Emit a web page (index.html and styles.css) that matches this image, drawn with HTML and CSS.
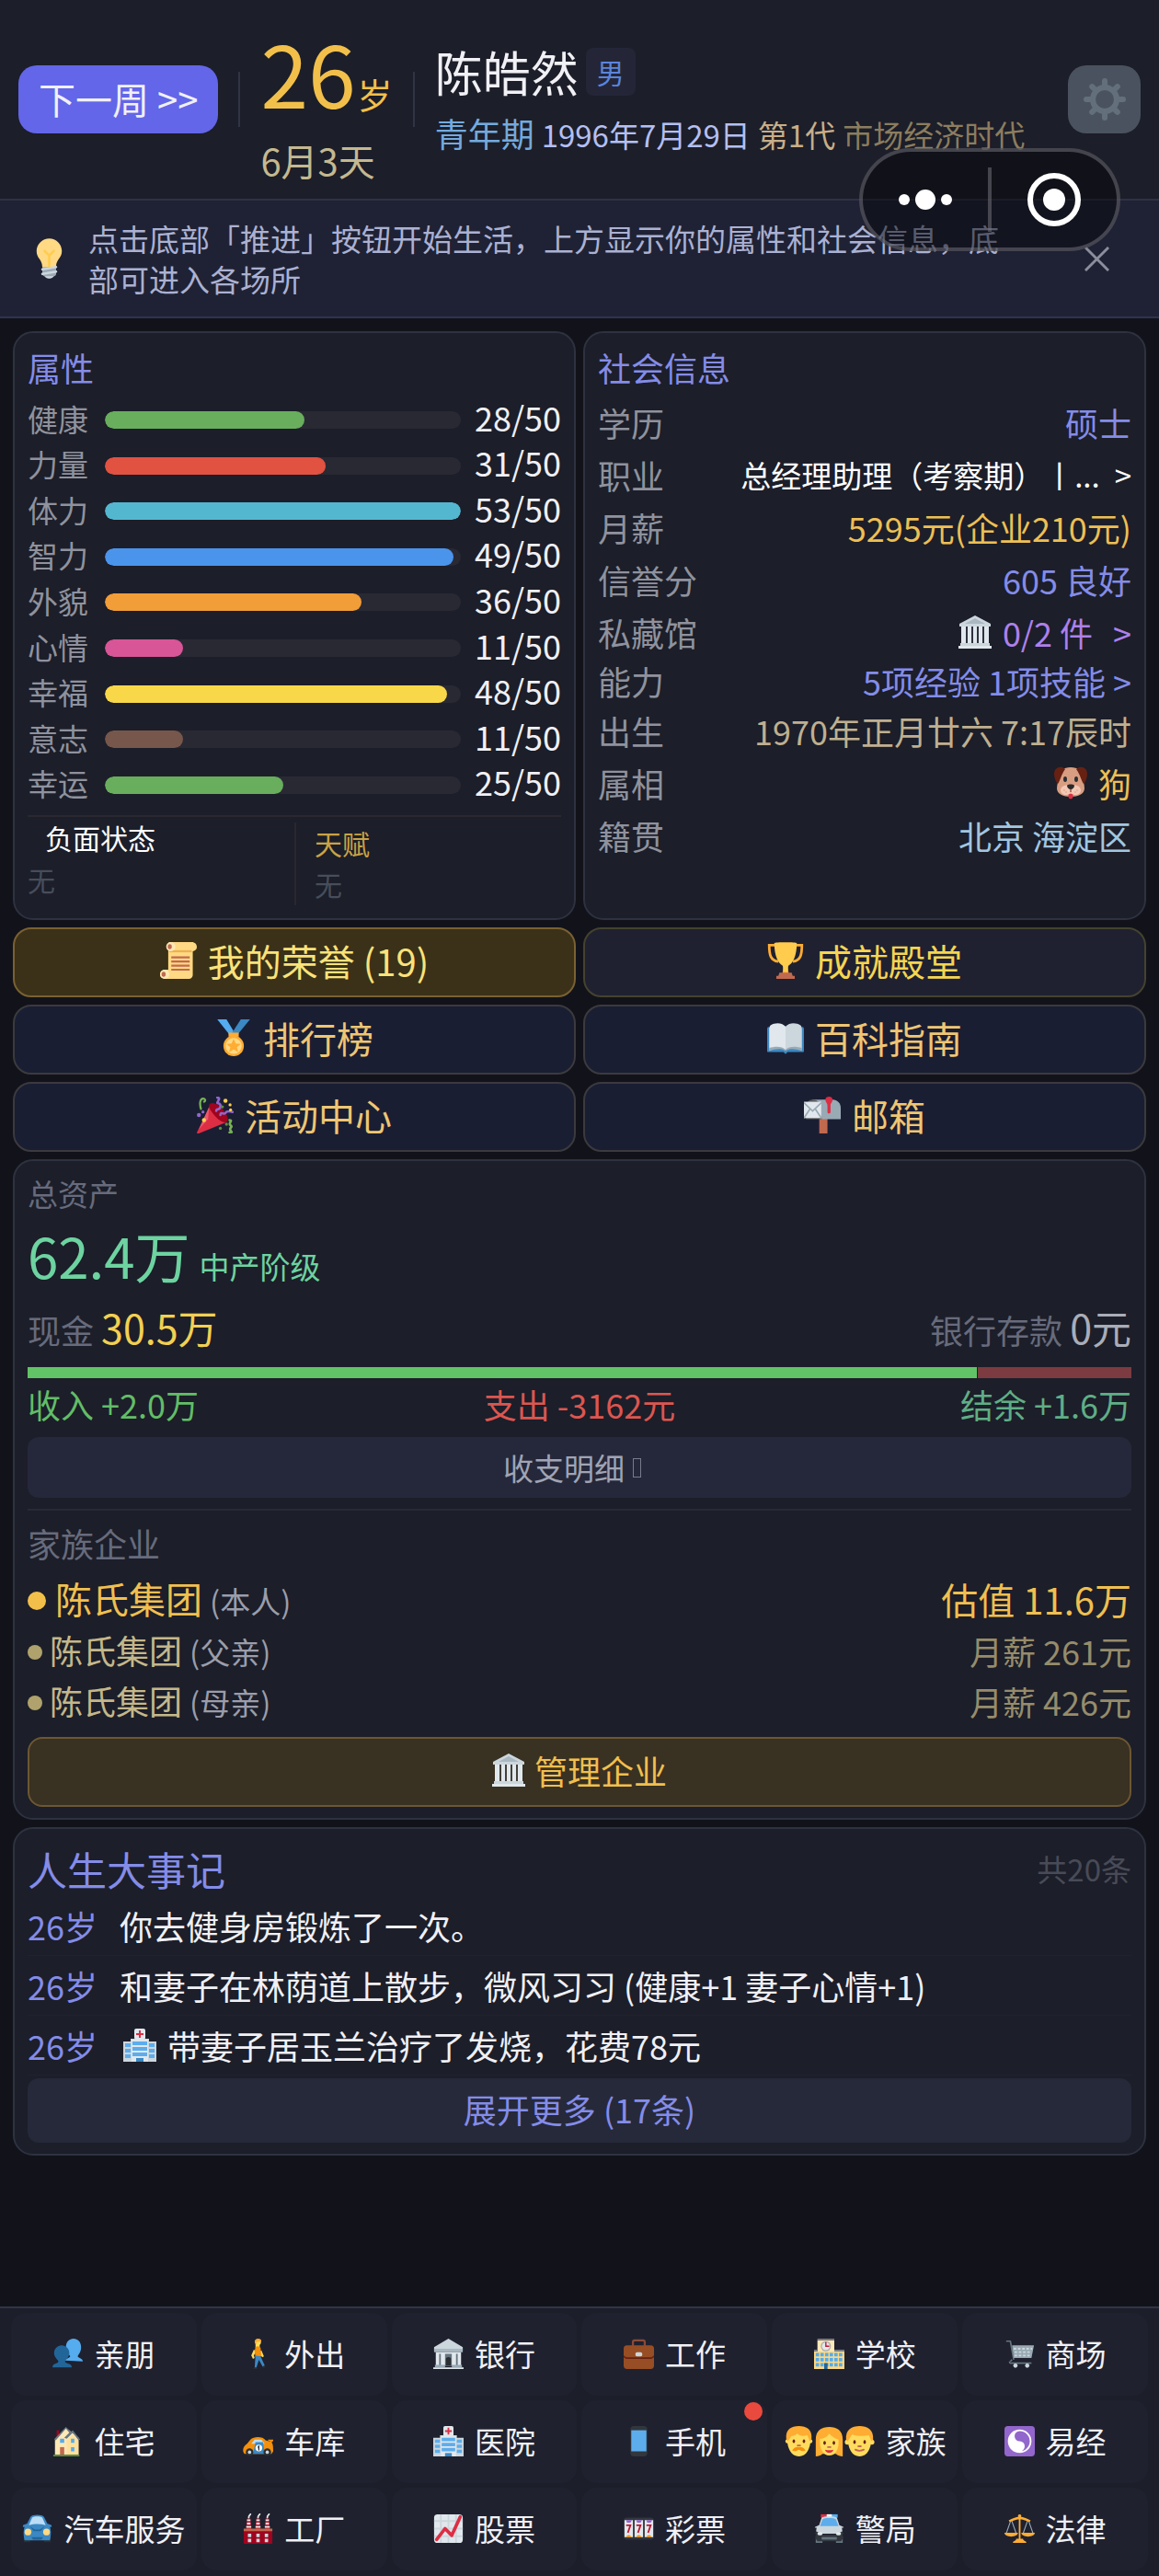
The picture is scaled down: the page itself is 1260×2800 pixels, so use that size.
FILE: index.html
```html
<!DOCTYPE html>
<html lang="zh-CN">
<head>
<meta charset="utf-8">
<meta name="viewport" content="width=device-width, initial-scale=1">
<title>陈皓然</title>
<link rel="stylesheet" href="styles.css">
</head>
<body>
<svg class="sprite" aria-hidden="true">
  <symbol id="i-bulb" viewBox="0 0 36 36"><path fill="#FFD983" d="M29 11.06c0 6.439-5 7.439-5 13.44 0 3.098-3.123 3.359-5.5 3.359-2.053 0-6.586-.779-6.586-3.361C11.914 18.5 7 17.5 7 11.06 7 5.029 12.285.14 18.083.14 23.883.14 29 5.029 29 11.06z"/><path fill="#CCD6DD" d="M22.167 32.5c0 .828-2.234 2.5-4.167 2.5-1.933 0-4.167-1.672-4.167-2.5 0-.828 2.233-.5 4.167-.5 1.933 0 4.167-.328 4.167.5z"/><path fill="#FFCC4D" d="M22.707 10.293c-.391-.391-1.023-.391-1.414 0L18 13.586l-3.293-3.293c-.391-.391-1.023-.391-1.414 0s-.391 1.023 0 1.414L17 15.414V26c0 .553.447 1 1 1s1-.447 1-1V15.414l3.707-3.707c.391-.391.391-1.023 0-1.414z"/><path fill="#99AAB5" d="M24 31c0 1.104-.896 2-2 2h-8c-1.104 0-2-.896-2-2v-6h12v6z"/><path fill="none" stroke="#CCD6DD" stroke-width="2" stroke-linecap="round" d="M12 31l12-2M12 27l12-2"/></symbol>
  <symbol id="i-gear" viewBox="0 0 48 48"><g fill="none" stroke="#63707b" stroke-width="6" stroke-linecap="round"><circle cx="24" cy="24" r="13"/><path d="M24 8V4M24 40v4M8 24H4M40 24h4M12.700 12.700l-2.500-2.500M35.300 35.300l2.500 2.500M12.700 35.300l-2.500 2.500M35.300 12.700l2.500-2.500"/></g></symbol>
  <symbol id="i-museum" viewBox="0 0 36 36"><path fill="#AAB8C2" d="M18 1L3 10h30z"/><path fill="#66757F" d="M5 12h26v18H5z" opacity=".25"/><path fill="#CCD6DD" d="M18 0L1 9v3h34V9zM18 3l11 6H7z"/><path fill="#E1E8ED" d="M3 12h5v19H3zM10 12h4v19h-4zM16 12h4v19h-4zM22 12h4v19h-4zM28 12h5v19h-5z"/><path fill="#CCD6DD" d="M2 30h32v3H2z"/><path fill="#E1E8ED" d="M0 33h36v3H0z"/></symbol>
  <symbol id="i-dog" viewBox="0 0 36 36"><path fill="#D99E82" d="M18 1c8 0 12 4 13 10 0 5 2 8 2 13 0 6-7 9-15 9S3 30 3 24c0-5 2-8 2-13C6 5 10 1 18 1z"/><path fill="#662113" d="M9 1C4 0 0 3 0 8c0 5 2 9 4 11 3-4 3-9 8-16zM27 1c5-1 9 2 9 7 0 5-2 9-4 11-3-4-3-9-8-16z"/><path fill="#DD2E44" d="M15.500 30h5v3a2.500 2.500 0 0 1-5 0z"/><path fill="#F4C7B5" d="M18 20c7 0 11 2 11 6 0 3-3 5-6 5s-5-2-5-3c0 1-2 3-5 3s-6-2-6-5c0-4 4-6 11-6z"/><path fill="#272B2B" d="M14 21c0-2 8-2 8 0 0 2-2 4-4 4s-4-2-4-4z"/><ellipse cx="12" cy="14" rx="2" ry="3" fill="#292F33"/><ellipse cx="24" cy="14" rx="2" ry="3" fill="#292F33"/><path stroke="#662113" fill="none" d="M18 24v4"/><g fill="#D99E82"><circle cx="11" cy="26" r=".8"/><circle cx="13" cy="28" r=".8"/><circle cx="25" cy="26" r=".8"/><circle cx="23" cy="28" r=".8"/></g></symbol>
  <symbol id="i-scroll" viewBox="0 0 36 36"><path fill="#FFD983" d="M8 2c0-2 1-2 4-2h19c3 0 5 2 5 5 0 2-2 4-4 4v23c0 3-2 4-4 4H5c-3 0-5-2-5-4 0-3 2-5 5-5h3z"/><path fill="#E39F3D" d="M9 8h22v2H9z" opacity=".7"/><circle cx="10.500" cy="4.500" r="4.500" fill="#FFE8B6"/><ellipse cx="9.500" cy="4.500" rx="2" ry="2.500" fill="#C1694F"/><circle cx="4.500" cy="31.500" r="4.500" fill="#FFE8B6"/><ellipse cx="3.500" cy="31.500" rx="2" ry="2.500" fill="#C1694F"/><path stroke="#C1694F" stroke-width="2" d="M11 15h18M11 19h18M11 23h18M11 27h18"/></symbol>
  <symbol id="i-trophy" viewBox="0 0 36 36"><path fill="none" stroke="#FFAC33" stroke-width="2.500" d="M9 3H2c0 9 1 15 9 16M27 3h7c0 9-1 15-9 16"/><path fill="#FFAC33" d="M16 20h4l1 11h-6z"/><path fill="#FFCC4D" d="M7 1C7 0 29 0 29 1c0 13-4 20-8 22-1 1-1 4-1 6h-4c0-2 0-5-1-6C11 21 7 14 7 1z"/><path fill="#C1694F" d="M12 30h12l1 3h2v3H9v-3h2z"/></symbol>
  <symbol id="i-medal" viewBox="0 0 36 36"><path fill="#55ACEE" d="M2 0h9l9 15h-6z"/><path fill="#3B88C3" d="M25 0h9L21 16l-5-2z"/><path fill="#FFAC33" d="M13 13h10v4H13z"/><circle cx="18" cy="26" r="10" fill="#FFAC33"/><circle cx="18" cy="26" r="7.800" fill="#FFD983"/><path fill="#FFAC33" d="M18 19l2 4.700 5 .3-3.800 3.300L22.500 32 18 29.500 13.500 32l1.300-4.700L11 24l5-.3z"/></symbol>
  <symbol id="i-book" viewBox="0 0 36 36"><path fill="#3B88C3" d="M1 7l15 22h4L35 7l1 2v22c0 1-1 1-2 1H20l-2 2-2-2H2c-1 0-2 0-2-1V9z"/><path fill="#E1E8ED" d="M3 6c5-3 11-3 15 1v23c-4-3-10-3-16 0V8z"/><path fill="#CCD6DD" d="M33 6c-5-3-11-3-15 1v23c4-3 10-3 16 0V8z"/><path fill="#99AAB5" d="M2 28c6-2 13-2 16 2v1c-4-3-10-2-16 0zM34 28c-6-2-13-2-16 2v1c4-3 10-2 16 0z"/></symbol>
  <symbol id="i-party" viewBox="0 0 36 36"><path fill="#DD2E44" d="M14 7L0 35c0 1 1 1 2 1l27-11z"/><path fill="#A0041E" d="M13 7c3-2 9 1 13 6s6 10 3 12c-3 1-8-2-12-7S10 9 13 7z"/><path fill="#EA596E" d="M12 10L2 32l9-10z"/><path fill="none" stroke="#77B255" stroke-width="2" stroke-linecap="round" d="M4 12c-2-7 0-11 3-10 2 1 1 3 0 3"/><path fill="none" stroke="#9266CC" stroke-width="2.300" stroke-linecap="round" d="M20 1c4 0 0 4 0 5s4 0 3 4-4 1-4 4"/><path fill="none" stroke="#9266CC" stroke-width="2.300" stroke-linecap="round" d="M23 18c0-4 4 0 5-2s3-2 7-1"/><path fill="none" stroke="#77B255" stroke-width="2.300" stroke-linecap="round" d="M32 23c4 0-2 3 1 5s-2 2 0 5 1 1-1 2"/><g fill="#FFCC4D"><circle cx="28" cy="4" r="2"/><circle cx="32.500" cy="8" r="1.500"/><circle cx="33" cy="13" r="1.500"/><circle cx="7" cy="23" r="2"/></g><g fill="#9266CC"><circle cx="2" cy="18" r="2"/><circle cx="6" cy="15" r="1.500"/></g><g fill="#5C913B"><circle cx="25" cy="10" r="1.500"/><circle cx="23" cy="31" r="1.500"/><circle cx="29" cy="27" r="1.500"/></g></symbol>
  <symbol id="i-mailbox" viewBox="0 0 36 36"><path fill="#C1694F" d="M15 20h8v16h-8z"/><path fill="#99AAB5" d="M8 3h20c5 0 8 4 8 8v11H18z"/><path fill="#58595B" d="M8 3c6 0 9 4 9 9v10H2V11c0-4 2-8 6-8z"/><path fill="#E1E8ED" d="M0 5h17v16H0z"/><path fill="none" stroke="#99AAB5" stroke-width="1.500" d="M0 6l8.500 8L17 6M0 21l6-9M17 21l-6-9"/><path fill="#DD2E44" d="M21 3c0-4 7-4 7 0 0 3-2 3-2 6v6c0 2-3 2-3 0V9c0-3-2-3-2-6z"/></symbol>
  <symbol id="i-people" viewBox="0 0 36 36"><path fill="#55ACEE" d="M15 26c1-3 6-3 6-5s-5-4-5-11c0-6 4-10 9-10s9 4 9 10c0 7-4 9-4 11s6 2 6 6z"/><path fill="#269" d="M0 34c0-5 7-4 7-7 0-2-5-4-5-10 0-5 4-9 9-9s9 4 9 9c0 6-5 8-5 10 0 3 8 2 8 7z"/></symbol>
  <symbol id="i-walk" viewBox="0 0 36 36"><path fill="#FFDC5D" d="M15 6h5v5h-5zM13 13l-3 7 2 4 2-1-1-3 3-5zM22 14l3 7-2 1-4-6z"/><circle cx="18" cy="4" r="3.500" fill="#FFDC5D"/><path fill="#FFAC33" d="M14 4c0-5 8-5 8-1l-6 1v3z"/><path fill="#F4900C" d="M15 10c2-2 5-1 6 1l1 10-7 1-1-7z"/><path fill="#3B88C3" d="M15 20l6 1 5 11-2 2-5-9-3 10h-2z"/><path fill="#292F33" d="M13 34h4v2h-5zM23 33l3-1 1 2-3 1z"/></symbol>
  <symbol id="i-bank" viewBox="0 0 36 36"><path fill="#E1E8ED" d="M3 16h30v16H3z"/><path fill="#CCD6DD" d="M18 0L1 10v4h34v-4z"/><path fill="#AAB8C2" d="M1 12h34v4H1z"/><path fill="#66757F" d="M7 18h2v14H7zM14 18h8v14h-8zM27 18h2v14h-2z"/><path fill="#292F33" d="M15 32v-8c0-3 6-3 6 0v8z"/><path fill="#99AAB5" d="M2 31h12v3H2zM22 31h12v3H22z"/><path fill="#E1E8ED" d="M0 34h36v2H0z"/></symbol>
  <symbol id="i-case" viewBox="0 0 36 36"><path fill="none" stroke="#8A4B38" stroke-width="2.500" d="M11 9V4c0-2 1-2 2-2h10c1 0 2 0 2 2v5"/><rect y="8" width="36" height="28" rx="4" fill="#974E24"/><path fill="#662113" d="M0 20l3 2h30l3-2v2l-3 2H3l-3-2z"/><rect x="14" y="16" width="8" height="5" rx="2" fill="#CCD6DD"/></symbol>
  <symbol id="i-school" viewBox="0 0 36 36"><path fill="#FFE8B6" d="M4 2h20v34H4z"/><path fill="#FFD983" d="M0 15h36v21H0z"/><path fill="#808285" d="M4 0h20v2H4zM24 13h12v2H24zM0 13h4v2H0z"/><circle cx="14" cy="9" r="6" fill="#A7A9AC"/><circle cx="14" cy="9" r="4.700" fill="#E6E7E8"/><path fill="none" stroke="#BE1931" stroke-width="1.500" d="M14 4v5h4"/><path fill="none" stroke="#55ACEE" stroke-width="4" stroke-dasharray="4 1.500" d="M2 19h33M2 25h33M2 31h33"/><path fill="#226699" d="M12 29h4v7h-4z"/></symbol>
  <symbol id="i-cart" viewBox="0 0 36 36"><path fill="none" stroke="#66757F" stroke-width="1.800" stroke-linejoin="round" d="M2 3h5l4 22M7 27l2-2M6 27c0 3 2 2 4 2h22"/><path fill="#99AAB5" d="M9 8h26l-3 15H11z"/><path fill="none" stroke="#CCD6DD" stroke-width="2" stroke-dasharray="3 2" d="M11 12h22M12 16h20M12 20h20"/><circle cx="13" cy="32" r="2.500" fill="#CCD6DD"/><circle cx="27" cy="32" r="2.500" fill="#CCD6DD"/></symbol>
  <symbol id="i-house" viewBox="0 0 36 36"><path fill="#A0041E" d="M5 5h3v9H5z"/><path fill="#FFE8B6" d="M3 15L16 2l15 12v20H3z"/><path fill="#66757F" d="M2 16L16 1l6 6 2-2 9 11-2 1-7-9-7 7-3-1 6-6-4-5L4 17z"/><path fill="#FFD983" d="M17 17l7-7 7 8v16H17z" opacity=".5"/><path fill="#55ACEE" d="M9 15h5v5H9zM22 15h4v5h-4zM22 25h4v5h-4z"/><path fill="#C1694F" d="M9 25h5v9H9z"/><path fill="#5C913B" d="M1 34h31v2H1z"/></symbol>
  <symbol id="i-car" viewBox="0 0 36 36"><path fill="#F4900C" d="M5 21l4-5c4-4 15-4 18 1l7 2c2 2 2 6 2 11l-2 3H2c-3-3-2-9 3-12z"/><path fill="#BBDDF5" d="M14 16h8l4 5H10z"/><path fill="#3B88C3" d="M15 19h9l2 14H12z"/><path stroke="#F4900C" stroke-width="2" d="M30 17h6M32 20l3-3"/><circle cx="19" cy="26" r="4" fill="#fff"/><path stroke="#292F33" stroke-width="1.300" d="M18 25l1-1v5"/><g fill="#292F33"><circle cx="8" cy="31" r="4.500"/><circle cx="29" cy="31" r="4.500"/></g><g fill="#CCD6DD"><circle cx="8" cy="31" r="2"/><circle cx="29" cy="31" r="2"/></g></symbol>
  <symbol id="i-hospital" viewBox="0 0 36 36"><path fill="#CCD6DD" d="M0 14h8v-3h20v3h8v22H0z"/><rect x="12" width="12" height="12" rx="2" fill="#E1E8ED"/><path fill="#E1E8ED" d="M9 12h18v24H9z"/><path stroke="#DD2E44" stroke-width="2" d="M18 2v8M14 6h8"/><path fill="#5DADEC" d="M10 14h16v4H10zM10 20h16v4H10zM10 26h16v4H10zM2 16h6v4H2zM2 22h6v4H2zM2 28h6v4H2zM28 16h6v4h-6zM28 22h6v4h-6zM28 28h6v4h-6z"/><path fill="#3B88C3" d="M14 32h8v4h-8z"/></symbol>
  <symbol id="i-phone" viewBox="0 0 36 36"><rect x="8" width="20" height="36" rx="4" fill="#31373D"/><path fill="#5DADEC" d="M9 5h18v25H9z"/></symbol>
  <symbol id="i-man" viewBox="0 0 36 36"><path fill="#FFDC5D" d="M4 14C4 4 32 4 32 14c0 13-5 22-14 22S4 27 4 14z"/><circle cx="4.500" cy="18" r="2.500" fill="#FFDC5D"/><circle cx="31.500" cy="18" r="2.500" fill="#FFDC5D"/><path fill="#FFAC33" d="M3 15C2 4 9 0 18 0s16 4 15 15l-2 3-3-7c-5 1-9 1-12-2-2 2-5 3-7 3l-4 6z"/><g fill="#662113"><ellipse cx="12" cy="18" rx="1.500" ry="2.300"/><ellipse cx="24" cy="18" rx="1.500" ry="2.300"/></g><path stroke="#C1694F" stroke-width="2" stroke-linecap="round" d="M16.500 23h3"/><path fill="#F4900C" d="M18 25c5-1 7 3 8 4-3 2-6 0-8-1-2 1-5 3-8 1 1-1 3-5 8-4z"/></symbol>
  <symbol id="i-woman" viewBox="0 0 36 36"><path fill="#FFAC33" d="M2 36V16C2 5 9 1 18 1s16 4 16 15v20c-3 0-6-1-8-3H10c-2 2-5 3-8 3z"/><path fill="#FFDC5D" d="M7 15c6 0 9-3 11-6 4 4 7 6 11 7 1 12-4 19-11 19S6 27 7 15z"/><g fill="#662113"><ellipse cx="12.500" cy="20" rx="1.500" ry="2.300"/><ellipse cx="23.500" cy="20" rx="1.500" ry="2.300"/></g><path stroke="#C1694F" stroke-width="2" stroke-linecap="round" d="M16.500 25h3"/><path fill="#DD2E44" d="M13 28c4 1 6 1 10 0-1 5-9 5-10 0z"/></symbol>
  <symbol id="i-boy" viewBox="0 0 36 36"><path fill="#FFDC5D" d="M4 14C4 4 32 4 32 14c0 13-5 22-14 22S4 27 4 14z"/><circle cx="3.500" cy="19" r="3" fill="#FFDC5D"/><circle cx="32.500" cy="19" r="3" fill="#FFDC5D"/><path fill="#FFAC33" d="M2 16C1 4 9 0 18 0s17 4 16 16l-2 2-3-7c-7 1-13 1-20-1l-5 8z"/><g fill="#662113"><ellipse cx="12" cy="19" rx="1.500" ry="2.300"/><ellipse cx="24" cy="19" rx="1.500" ry="2.300"/></g><path stroke="#C1694F" stroke-width="2" stroke-linecap="round" d="M16.500 24h3"/><path fill="none" stroke="#C1694F" stroke-width="2" stroke-linecap="round" d="M13 28c4 2 6 2 10 0"/></symbol>
  <symbol id="i-yin" viewBox="0 0 36 36"><rect width="36" height="36" rx="4" fill="#9266CC"/><circle cx="18" cy="18" r="14" fill="#fff"/><path fill="#9266CC" d="M18 6a12 12 0 1 1 0 24 6 6 0 0 0 0-12 6 6 0 0 1 0-12z"/><circle cx="18" cy="12" r="2.500" fill="#9266CC"/><circle cx="18" cy="24" r="2.500" fill="#fff"/></symbol>
  <symbol id="i-auto" viewBox="0 0 36 36"><path fill="#292F33" d="M2 26h8v8H2zM26 26h8v8h-8z"/><path fill="#3B88C3" d="M6 12L10 4c2-3 14-3 16 0l4 8 5 2v2h-2c2 5 1 12 0 16H3c-1-4-2-11 0-16H1v-2z"/><path fill="#BBDDF5" d="M12 5c2-2 10-2 12 0l4 9c-7-2-13-2-20 0z"/><path fill="#269" d="M11 28h14l-2 3H13zM9 15l6 4h6l6-4-5 6h-8z"/><circle cx="7" cy="22" r="4" fill="#FFD983"/><circle cx="29" cy="22" r="4" fill="#FFD983"/></symbol>
  <symbol id="i-factory" viewBox="0 0 36 36"><path fill="#BE1931" d="M5 6h4l1 13H4zM16 6h4l1 13h-6zM27 6h4l1 13h-6z"/><path stroke="#E6E7E8" stroke-width="2" d="M5 8h4M5 12h4M4 16h6M16 8h4M16 12h4M15 16h6M27 8h4M27 12h4M26 16h6"/><path fill="none" stroke="#E6E7E8" stroke-width="2" stroke-linecap="round" d="M7 5c0-3 1-2 2-4M18 5c0-3 1-2 2-4M29 5c0-3 1-2 2-4"/><path fill="#A0041E" d="M1 19h34v16c0 1-1 1-1 1H2s-1 0-1-1z"/><path fill="#C1694F" d="M1 18h34v3H1z"/><path fill="#CCD6DD" d="M6 24h4v4H6zM16 24h4v4h-4zM26 24h4v4h-4zM6 30h4v4H6zM16 30h4v4h-4zM26 30h4v4h-4z"/></symbol>
  <symbol id="i-chart" viewBox="0 0 36 36"><rect x="1" y="1" width="34" height="34" rx="4" fill="#E1E8ED"/><path fill="none" stroke="#CCD6DD" stroke-width="2" d="M9 1v34M18 1v34M27 1v34M1 9h34M1 18h34M1 27h34"/><path fill="none" stroke="#DD2E44" stroke-width="4" stroke-linecap="round" stroke-linejoin="round" d="M4 31l10-13 8 8L32 4"/></symbol>
  <symbol id="i-slot" viewBox="0 0 36 36"><rect y="5" width="36" height="26" rx="4" fill="#31373D"/><path fill="#E1E8ED" d="M1 8h10v20H1zM13 8h10v20H13zM25 8h10v20H25z"/><path fill="#9266CC" d="M3 8h7l-2 3H4zM15 8h7l-2 3h-4zM27 8h7l-2 3h-4z"/><path fill="#F4900C" d="M3 28c1-3 5-3 6 0zM15 28c1-3 5-3 6 0zM27 28c1-3 5-3 6 0z"/><path fill="none" stroke="#BE1931" stroke-width="2" d="M3 14h5l-3 9M15 14h5l-3 9M27 14h5l-3 9"/></symbol>
  <symbol id="i-police" viewBox="0 0 36 36"><path fill="#66757F" d="M2 27h8v8H2zM26 27h8v8h-8z"/><path fill="#DD2E44" d="M8 1h10v4H8z"/><path fill="#55ACEE" d="M18 1h10v4H18z"/><path fill="#fff" d="M15 1h6v4h-6z"/><path fill="#CCD6DD" d="M6 14L9 5c2-2 16-2 18 0l3 9 5 2v1h-2l1 7H2l1-7H1v-1z"/><path fill="#5DADEC" d="M10 7c2-2 14-2 16 0l3 8H7z"/><path fill="#31373D" d="M2 21l9 4h14l9-4v9l-2 3H4l-2-3z"/><path fill="#66757F" d="M9 28h18v3H9z"/><rect x="4" y="22" width="6" height="4" rx="2" fill="#E1E8ED"/><rect x="26" y="22" width="6" height="4" rx="2" fill="#E1E8ED"/></symbol>
  <symbol id="i-scale" viewBox="0 0 36 36"><path fill="none" stroke="#99AAB5" stroke-width="1.200" d="M8 7L2 24M8 7l6 17M28 7l-6 17M28 7l6 17"/><path fill="#FFAC33" d="M17 2h2v31h-2zM5 8c4-1 6-4 13-4s9 3 13 4l-1 2c-5-1-6-3-12-3s-7 2-12 3zM0 23h16c0 6-16 6-16 0zM20 23h16c0 6-16 6-16 0zM14 30h8c0 3 4 2 4 5H10c0-3 4-2 4-5z"/><circle cx="18" cy="3" r="2" fill="#FFAC33"/></symbol>
</svg>

<header class="top">
  <button class="next" type="button">下一周 &gt;&gt;</button>
  <span class="rule"></span>
  <div class="age">
    <div class="age-main">26<small>岁</small></div>
    <div class="age-sub">6月3天</div>
  </div>
  <span class="rule"></span>
  <div class="who">
    <h1 class="name">陈皓然<span class="sex">男</span></h1>
    <p class="facts"><span class="stage">青年期</span><span class="date">1996年7月29日</span><span class="gen">第1代</span><span class="era">市场经济时代</span></p>
  </div>
  <button class="settings" type="button" aria-label="设置"><svg><use href="#i-gear"/></svg></button>
  <div class="capsule">
    <button type="button" aria-label="更多"><svg viewBox="0 0 60 60"><g fill="#fff"><circle cx="7" cy="30" r="6"/><circle cx="30" cy="30" r="11"/><circle cx="53" cy="30" r="6"/></g></svg></button>
    <span class="capsule-rule"></span>
    <button type="button" aria-label="关闭"><svg viewBox="0 0 60 60"><circle cx="30" cy="30" r="26" fill="none" stroke="#fff" stroke-width="6"/><circle cx="30" cy="30" r="12" fill="#fff"/></svg></button>
  </div>
</header>

<section class="notice">
  <svg class="notice-icon"><use href="#i-bulb"/></svg>
  <p>点击底部「推进」按钮开始生活，上方显示你的属性和社会信息，底部可进入各场所</p>
  <button class="dismiss" type="button" aria-label="关闭提示"><svg viewBox="0 0 28 28"><path d="M1 1l26 26M27 1L1 27" fill="none" stroke="#8b8e9c" stroke-width="3"/></svg></button>
</section>

<main class="main">
  <div class="pair">
    <section class="card">
      <h2 class="card-title">属性</h2>
      <div class="stats">
        <div class="stat"><span>健康</span><div class="track"><div class="fill green" style="width:56%"></div></div><b>28/50</b></div>
        <div class="stat"><span>力量</span><div class="track"><div class="fill red" style="width:62%"></div></div><b>31/50</b></div>
        <div class="stat"><span>体力</span><div class="track"><div class="fill cyan" style="width:100%"></div></div><b>53/50</b></div>
        <div class="stat"><span>智力</span><div class="track"><div class="fill blue" style="width:98%"></div></div><b>49/50</b></div>
        <div class="stat"><span>外貌</span><div class="track"><div class="fill orange" style="width:72%"></div></div><b>36/50</b></div>
        <div class="stat"><span>心情</span><div class="track"><div class="fill pink" style="width:22%"></div></div><b>11/50</b></div>
        <div class="stat"><span>幸福</span><div class="track"><div class="fill yellow" style="width:96%"></div></div><b>48/50</b></div>
        <div class="stat"><span>意志</span><div class="track"><div class="fill brown" style="width:22%"></div></div><b>11/50</b></div>
        <div class="stat"><span>幸运</span><div class="track"><div class="fill green" style="width:50%"></div></div><b>25/50</b></div>
      </div>
      <div class="traits">
        <div class="trait"><h3 class="trait-bad">负面状态</h3><p>无</p></div>
        <div class="trait trait-right"><h3 class="trait-good">天赋</h3><p>无</p></div>
      </div>
    </section>
    <section class="card">
      <h2 class="card-title">社会信息</h2>
      <dl class="info">
        <div><dt>学历</dt><dd class="c-indigo">硕士</dd></div>
        <div><dt>职业</dt><dd><a class="job" href="#"><span>总经理助理（考察期）丨...</span><span>&gt;</span></a></dd></div>
        <div><dt>月薪</dt><dd class="c-gold">5295元(企业210元)</dd></div>
        <div><dt>信誉分</dt><dd class="c-indigo">605 良好</dd></div>
        <div><dt>私藏馆</dt><dd><a class="c-purple" href="#"><svg class="ico"><use href="#i-museum"/></svg>0/2 件<span class="more">&gt;</span></a></dd></div>
        <div class="tight"><dt>能力</dt><dd><a class="c-indigo" href="#">5项经验 1项技能 &gt;</a></dd></div>
        <div><dt>出生</dt><dd class="c-sand">1970年正月廿六 7:17辰时</dd></div>
        <div><dt>属相</dt><dd class="c-gold"><svg class="ico"><use href="#i-dog"/></svg>狗</dd></div>
        <div><dt>籍贯</dt><dd class="c-sky">北京 海淀区</dd></div>
      </dl>
    </section>
  </div>

  <nav class="links">
    <button class="link honor" type="button"><svg class="ico"><use href="#i-scroll"/></svg>我的荣誉 (19)</button>
    <button class="link hall" type="button"><svg class="ico"><use href="#i-trophy"/></svg>成就殿堂</button>
    <button class="link" type="button"><svg class="ico"><use href="#i-medal"/></svg>排行榜</button>
    <button class="link" type="button"><svg class="ico"><use href="#i-book"/></svg>百科指南</button>
    <button class="link" type="button"><svg class="ico"><use href="#i-party"/></svg>活动中心</button>
    <button class="link" type="button"><svg class="ico"><use href="#i-mailbox"/></svg>邮箱</button>
  </nav>

  <section class="card assets">
    <h2 class="muted-title">总资产</h2>
    <p class="total">62.4万<span>中产阶级</span></p>
    <div class="split money"><span>现金<b class="cash">30.5万</b></span><span>银行存款<b>0元</b></span></div>
    <div class="ratio"><div class="ratio-in" style="width:86%"></div><div class="ratio-out"></div></div>
    <div class="split flow"><span class="in">收入 +2.0万</span><span class="out">支出 -3162元</span><span class="net">结余 +1.6万</span></div>
    <button class="plain detail" type="button">收支明细<i class="box"></i></button>
    <div class="firm">
      <h2 class="firm-title">家族企业</h2>
      <div class="split own"><span><i class="dot"></i>陈氏集团<small>(本人)</small></span><span>估值 11.6万</span></div>
      <div class="split kin"><span><i class="dot"></i>陈氏集团<small>(父亲)</small></span><span class="wage">月薪 261元</span></div>
      <div class="split kin"><span><i class="dot"></i>陈氏集团<small>(母亲)</small></span><span class="wage">月薪 426元</span></div>
      <button class="manage" type="button"><svg class="ico"><use href="#i-museum"/></svg>管理企业</button>
    </div>
  </section>

  <section class="card events">
    <div class="split events-head"><h2>人生大事记</h2><span>共20条</span></div>
    <ul>
      <li><span>26岁</span><p>你去健身房锻炼了一次。</p></li>
      <li><span>26岁</span><p>和妻子在林荫道上散步，微风习习 (健康+1 妻子心情+1)</p></li>
      <li><span>26岁</span><p><svg class="ico"><use href="#i-hospital"/></svg>带妻子居玉兰治疗了发烧，花费78元</p></li>
    </ul>
    <button class="plain expand" type="button">展开更多 (17条)</button>
  </section>
</main>

<nav class="dock">
  <button type="button"><svg class="ico"><use href="#i-people"/></svg>亲朋</button>
  <button type="button"><svg class="ico"><use href="#i-walk"/></svg>外出</button>
  <button type="button"><svg class="ico"><use href="#i-bank"/></svg>银行</button>
  <button type="button"><svg class="ico"><use href="#i-case"/></svg>工作</button>
  <button type="button"><svg class="ico"><use href="#i-school"/></svg>学校</button>
  <button type="button"><svg class="ico"><use href="#i-cart"/></svg>商场</button>
  <button type="button"><svg class="ico"><use href="#i-house"/></svg>住宅</button>
  <button type="button"><svg class="ico"><use href="#i-car"/></svg>车库</button>
  <button type="button"><svg class="ico"><use href="#i-hospital"/></svg>医院</button>
  <button type="button"><svg class="ico"><use href="#i-phone"/></svg>手机<i class="badge"></i></button>
  <button type="button"><span class="family"><svg class="ico"><use href="#i-man"/></svg><svg class="ico"><use href="#i-woman"/></svg><svg class="ico"><use href="#i-boy"/></svg></span>家族</button>
  <button type="button"><svg class="ico"><use href="#i-yin"/></svg>易经</button>
  <button type="button"><svg class="ico"><use href="#i-auto"/></svg>汽车服务</button>
  <button type="button"><svg class="ico"><use href="#i-factory"/></svg>工厂</button>
  <button type="button"><svg class="ico"><use href="#i-chart"/></svg>股票</button>
  <button type="button"><svg class="ico"><use href="#i-slot"/></svg>彩票</button>
  <button type="button"><svg class="ico"><use href="#i-police"/></svg>警局</button>
  <button type="button"><svg class="ico"><use href="#i-scale"/></svg>法律</button>
</nav>
</body>
</html>
```

FILE: styles.css
```css
* { box-sizing: border-box; margin: 0; padding: 0; }

body {
  min-height: 100vh;
  display: flex;
  flex-direction: column;
  background: #12131a;
  color: #f0f0f5;
  font-family: "Noto Sans CJK SC", sans-serif;
  font-size: 36px;
  line-height: 50px;
}

button { font: inherit; color: inherit; border: 0; background: none; cursor: pointer; white-space: nowrap; }
a { color: inherit; text-decoration: none; }
ul { list-style: none; }
h1, h2, h3, b { font-weight: 400; }
i { font-style: normal; }
.sprite { position: absolute; width: 0; height: 0; }
.ico { width: 1em; height: 1em; flex: none; }

/* header */
.top {
  position: relative;
  display: flex;
  align-items: center;
  gap: 22px;
  height: 218px;
  padding: 0 20px;
  background: #1c1e29;
  border-bottom: 2px solid #2f3244;
}
.next {
  height: 74px;
  padding: 0 22px 2px;
  border-radius: 20px;
  background: #6366e8;
  font-size: 40px;
}
.rule { width: 2px; height: 60px; background: #313443; }
.age { white-space: nowrap; }
.age-main { font-size: 93px; line-height: 132px; color: #f2c04a; }
.age-main small { margin-left: 2px; font-size: 38px; line-height: 38px; }
.age-sub { font-size: 40px; line-height: 60px; color: #c4b990; }
.who { flex: 1; white-space: nowrap; }
.name { display: flex; align-items: center; gap: 8px; font-size: 52px; line-height: 74px; }
.sex {
  padding: 0 12px;
  border-radius: 8px;
  background: #242638;
  color: #5a85dc;
  font-size: 30px;
  line-height: 52px;
}
.facts { display: flex; align-items: baseline; gap: 8px; font-size: 33px; line-height: 58px; }
.stage { font-size: 36px; color: #74aade; }
.date { color: #b4bff2; }
.gen { color: #c9ad87; }
.era { color: #8b7d5f; }
.settings {
  display: grid;
  place-items: center;
  width: 79px;
  height: 74px;
  border-radius: 20px;
  background: #4b525f;
}
.settings svg { width: 48px; height: 48px; }

/* host app controls, floating over the page */
.capsule {
  position: absolute;
  z-index: 1;
  top: 161px;
  right: 42px;
  display: flex;
  align-items: center;
  width: 284px;
  height: 112px;
  border: 4px solid rgba(120, 120, 130, .5);
  border-radius: 56px;
  background: rgba(6, 6, 10, .5);
}
.capsule button { flex: 1; display: grid; place-items: center; }
.capsule svg { width: 60px; height: 60px; }
.capsule-rule { width: 4px; height: 70px; background: rgba(120, 120, 130, .5); }

/* notice */
.notice {
  display: flex;
  align-items: center;
  gap: 20px;
  padding: 19px 36px 19px 31px;
  background: #1f2234;
  border-bottom: 2px solid #2f3350;
  color: #abb1d2;
  font-size: 33px;
  line-height: 44px;
}
.notice-icon { width: 45px; height: 45px; flex: none; }
.notice p { flex: 1; }
.dismiss { width: 64px; height: 64px; margin-left: 28px; display: grid; place-items: center; }
.dismiss svg { width: 27px; height: 27px; }

/* cards */
.main { display: flex; flex-direction: column; gap: 8px; padding: 14px 14px 0; }
.pair { display: grid; grid-template-columns: 1fr 1fr; gap: 8px; }
.card {
  padding: 12px 14px;
  border: 2px solid #2e3240;
  border-radius: 22px;
  background: #1c1e29;
}
.card-title { padding-bottom: 6px; color: #848ce8; font-size: 36px; line-height: 50px; }

.stats { display: grid; grid-auto-rows: 1fr; height: 446px; line-height: 46px; }
.stat { display: flex; align-items: center; font-size: 33px; }
.stat span { width: 84px; color: #8f929d; }
.stat b { width: 109px; font-size: 36px; line-height: 42px; padding-bottom: 4px; text-align: right; }
.track { flex: 1; height: 19px; margin-top: 4px; border-radius: 10px; background: #292934; overflow: hidden; }
.fill { height: 100%; border-radius: 10px; }
.green { background: #69ae5d; }
.red { background: #e15241; }
.cyan { background: #54b7d0; }
.blue { background: #4a94ec; }
.orange { background: #f19d38; }
.pink { background: #d85597; }
.yellow { background: #f8d849; }
.brown { background: #77574b; }

.traits {
  display: grid;
  grid-template-columns: 1fr 1fr;
  margin-top: 10px;
  padding: 6px 0 2px;
  border-top: 2px solid #29272f;
  font-size: 30px;
  line-height: 45px;
}
.trait h3 { font-size: 30px; }
.trait p { color: #464d5b; }
.trait-bad { padding: 0 0 8px 19px; color: #fff; line-height: 32px; }
.trait-right { padding: 0 0 0 20px; border-left: 2px solid #29272f; }
.trait-good { color: #c9a345; }

.info > div { display: flex; justify-content: space-between; align-items: center; height: 57px; }
.info > .tight { height: 50px; }
.info dt { color: #8f929d; }
.info dd, .info a { display: flex; align-items: center; white-space: nowrap; }
.info .ico { margin-right: 12px; }
.info .job { gap: 16px; font-size: 33px; color: #fff; }
.more { margin-left: 22px; }
.c-indigo { color: #848ce8; }
.c-gold { color: #edbf55; }
.c-purple { color: #ae80ea; }
.c-sand { color: #bfaf90; }
.c-sky { color: #a2c6e0; }

/* shortcut buttons */
.links { display: grid; grid-template-columns: 1fr 1fr; gap: 8px; }
.link {
  display: flex;
  align-items: center;
  justify-content: center;
  gap: 12px;
  height: 76px;
  padding-bottom: 4px;
  border: 2px solid #3b3a3e;
  border-radius: 20px;
  background: #1a1e33;
  color: #efc673;
  font-size: 40px;
}
.honor { background: #3a3118; border-color: #7a6132; color: #fae27a; }
.hall { background: #1f2130; border-color: #45422f; color: #f5d552; }

/* assets */
.split { display: flex; justify-content: space-between; align-items: center; }
.muted-title { color: #676b7c; font-size: 33px; line-height: 46px; }
.total { display: flex; align-items: baseline; gap: 10px; color: #6dd3a0; font-size: 60px; line-height: 88px; }
.total span { font-size: 33px; line-height: 40px; }
.money { height: 70px; color: #676b7c; }
.money b { margin-left: 8px; font-size: 43px; color: #a9adb8; }
.money .cash { color: #f2d052; }
.ratio { display: flex; gap: 1px; height: 12px; margin-top: 8px; }
.ratio-in { background: #61c466; }
.ratio-out { flex: 1; background: #7c3b40; }
.flow { padding-bottom: 8px; line-height: 56px; }
.in { color: #62bd67; }
.out { color: #dc5650; }
.net { color: #5fae86; }
.plain { display: flex; align-items: center; justify-content: center; width: 100%; border-radius: 12px; background: #25283a; }
.detail { height: 66px; color: #a0a4b4; font-size: 33px; }
.box { width: 9px; height: 21px; margin: 0 16px 0 9px; border: 1px solid #777b8a; }
.firm { margin-top: 12px; padding-top: 10px; border-top: 2px solid #272a37; }
.firm-title { padding-bottom: 8px; color: #676b7c; font-size: 36px; line-height: 50px; }
.split > span { display: flex; align-items: baseline; }
.own { height: 56px; color: #f0bf4f; font-size: 40px; }
.kin { height: 55px; color: #c4b78a; }
.wage { color: #968c6b; }
.firm small { margin-left: 8px; font-size: 33px; color: #9b9daa; }
.dot { align-self: center; width: 16px; height: 16px; margin: 4px 8px 0 0; border-radius: 50%; background: #b0a26c; }
.own .dot { width: 20px; height: 20px; margin-right: 10px; background: #f2c04a; }
.manage {
  display: flex;
  align-items: center;
  justify-content: center;
  gap: 10px;
  width: 100%;
  height: 76px;
  margin-top: 12px;
  padding-bottom: 4px;
  border: 2px solid #6c5732;
  border-radius: 16px;
  background: #393121;
  color: #f0bf4f;
}

/* events */
.events-head { height: 61px; color: #484b57; font-size: 33px; }
.events-head h2 { color: #848ce8; font-size: 43px; }
.events li { display: flex; align-items: center; gap: 24px; height: 65px; border-bottom: 1px solid #20222e; }
.events li span { color: #848ce8; }
.events li p { display: flex; align-items: center; }
.events li .ico { margin: 0 12px 0 4px; }
.expand { height: 70px; margin-top: 3px; padding-bottom: 4px; background: #262939; color: #848ce8; }

/* bottom navigation */
.dock {
  display: grid;
  grid-template-columns: repeat(6, 1fr);
  gap: 5px;
  margin-top: auto;
  padding: 5px 12px 6px;
  background: #1c1e29;
  border-top: 2px solid #303545;
}
.dock button {
  position: relative;
  display: flex;
  align-items: center;
  justify-content: center;
  gap: 12px;
  height: 90px;
  padding-bottom: 2px;
  border-radius: 16px;
  background: #1f212f;
  font-size: 33px;
}
.family { display: flex; }
.badge { position: absolute; top: 2px; right: 5px; width: 20px; height: 20px; border-radius: 50%; background: #ea4a3d; }
```
